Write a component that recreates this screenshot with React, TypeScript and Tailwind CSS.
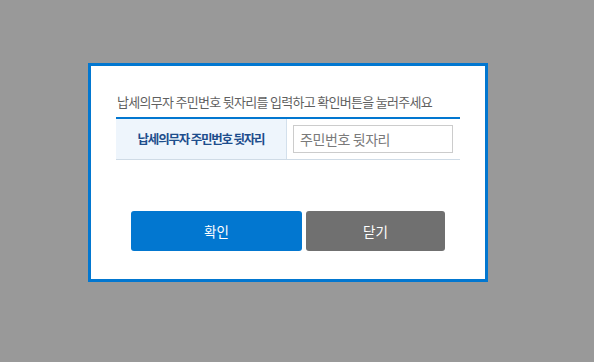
const font = { fontFamily: '"Noto Sans CJK KR", "Noto Sans", sans-serif' };

const ResidentNumberDialog = () => {
  return (
    <div className="w-[400px] border-[3px] border-[#0277d0] bg-white pt-[27px] pb-[28px]">
      <p className="ml-[26px] h-[18px] text-[13px] leading-[18px] text-[#5f5f5f] tracking-[-0.7px] mb-[6px]">
        납세의무자 주민번호 뒷자리를 입력하고 확인버튼을 눌러주세요
      </p>
      <div className="mx-auto w-[344px] border-t-2 border-b border-t-[#0277d0] border-b-[#cfdbe6] flex h-[43px]">
        <div className="w-[171px] bg-[#eef5fc] border-r border-[#d3e0ec] flex items-center justify-center text-[12.5px] font-bold text-[#1d4d8c] tracking-[-1.2px]">
          납세의무자 주민번호 뒷자리
        </div>
        <div className="flex-1 flex items-center pl-[6px]">
          <input
            type="text"
            placeholder="주민번호 뒷자리"
            className="w-[160px] h-[28px] border border-[#cccccc] px-[6px] text-[14px] text-[#333] placeholder:text-[#7a7a7a] outline-none tracking-[-0.4px]"
            style={font}
          />
        </div>
      </div>
      <div className="mt-[51px] flex justify-center gap-[4px]">
        <button className="w-[171px] h-[40px] rounded-[3px] bg-[#0277d0] text-white text-[13.5px]" style={font}>
          확인
        </button>
        <button className="w-[139px] h-[40px] rounded-[3px] bg-[#707070] text-white text-[13.5px]" style={font}>
          닫기
        </button>
      </div>
    </div>
  );
};

export default function App() {
  return (
    <div className="w-[594px] h-[362px] bg-[#999999] pl-[88px] pt-[63px]" style={font}>
      <ResidentNumberDialog />
    </div>
  );
}
